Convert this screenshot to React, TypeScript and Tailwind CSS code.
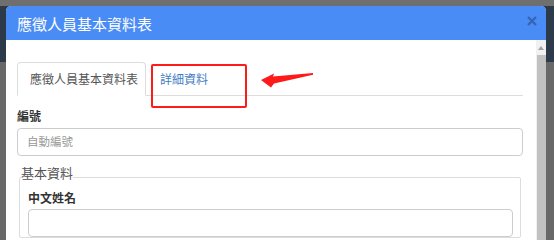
import React from "react";

const font = { fontFamily: '"Noto Sans CJK TC", "Noto Sans", sans-serif' };

export default function App() {
  return (
    <div
      className="w-[554px] h-[240px] overflow-hidden pl-[6px] pt-[6px] pr-[8px] bg-[linear-gradient(to_bottom,#6f6f6f_0px,#6f6f6f_6px,#2c3a4a_6px,#2c3a4a_62px,#686868_62px)]"
      style={font}
    >
      <div className="flex h-[234px] flex-col rounded-t-[5px] overflow-hidden bg-white">
        {/* Header */}
        <div className="flex h-[34px] shrink-0 items-center justify-between bg-[#4a8cf5] pl-[11px] pr-[9px]">
          <span className="text-[15px] leading-none text-white">應徵人員基本資料表</span>
          <svg width="10" height="10" viewBox="0 0 10 10" className="-mt-[4px]">
            <path d="M1 1 L9 9 M9 1 L1 9" stroke="#3564b0" strokeWidth="2.2" strokeLinecap="butt" />
          </svg>
        </div>
        {/* Body */}
        <div className="flex flex-1 flex-row">
          <div className="relative flex-1 pl-[11px] pr-[13px] pt-[22px]">
            {/* Tabs */}
            <div className="flex h-[34px] border-b border-[#dddddd]">
              <div className="-mb-[1px] flex h-[34px] w-[129px] items-center rounded-t-[4px] border border-[#dddddd] border-b-white bg-white pl-[12px] text-[12px] text-[#555555]">
                應徵人員基本資料表
              </div>
              <div className="ml-[2px] flex h-[33px] items-center pl-[12px] pr-[12px] text-[12px] text-[#3f7cc4]">
                詳細資料
              </div>
            </div>

            {/* Red highlight */}
            <div className="absolute left-[145px] top-[24px] h-[44px] w-[96px] rounded-[2px] border-2 border-[#ff1a1a]" />
            <svg className="absolute left-[250px] top-[28px]" width="70" height="22" viewBox="0 0 70 22">
              <polygon points="5,12 18,5.5 17,8.5 57,5 57,6.8 18,15.5 15,19.5" fill="#ff1a1a" />
            </svg>

            {/* 編號 */}
            <div className="mt-[11px] h-[18px] text-[12px] font-bold leading-[18px] text-[#333333]">編號</div>
            <div className="mt-[3px] flex h-[28px] items-center rounded-[4px] border border-[#cccccc] pl-[9px] text-[11.5px] text-[#999999]">
              自動編號
            </div>

            {/* Fieldset */}
            <fieldset className="mx-[2px] mt-[11px] rounded-[2px] border border-[#dcdcdc] pl-[8px] pr-[7px]">
              <legend className="-ml-[7px] pb-[8px] text-[13px] leading-[12px] text-[#555555]">基本資料</legend>
              <div className="mt-[2px] h-[18px] text-[12px] font-bold leading-[18px] text-[#333333]">中文姓名</div>
              <div className="mt-[2px] h-[28px] rounded-[4px] border border-[#cccccc]" />
            </fieldset>
          </div>
          {/* Scrollbar */}
          <div className="flex w-[10px] flex-col bg-[#f1f1f1]">
            <div className="flex h-[15px] items-center justify-center">
              <svg width="6" height="4" viewBox="0 0 6 4">
                <polygon points="0,4 3,0 6,4" fill="#a3a3a3" />
              </svg>
            </div>
            <div className="ml-[1px] flex-1 bg-[#c1c1c1]" />
          </div>
        </div>
      </div>
    </div>
  );
}
